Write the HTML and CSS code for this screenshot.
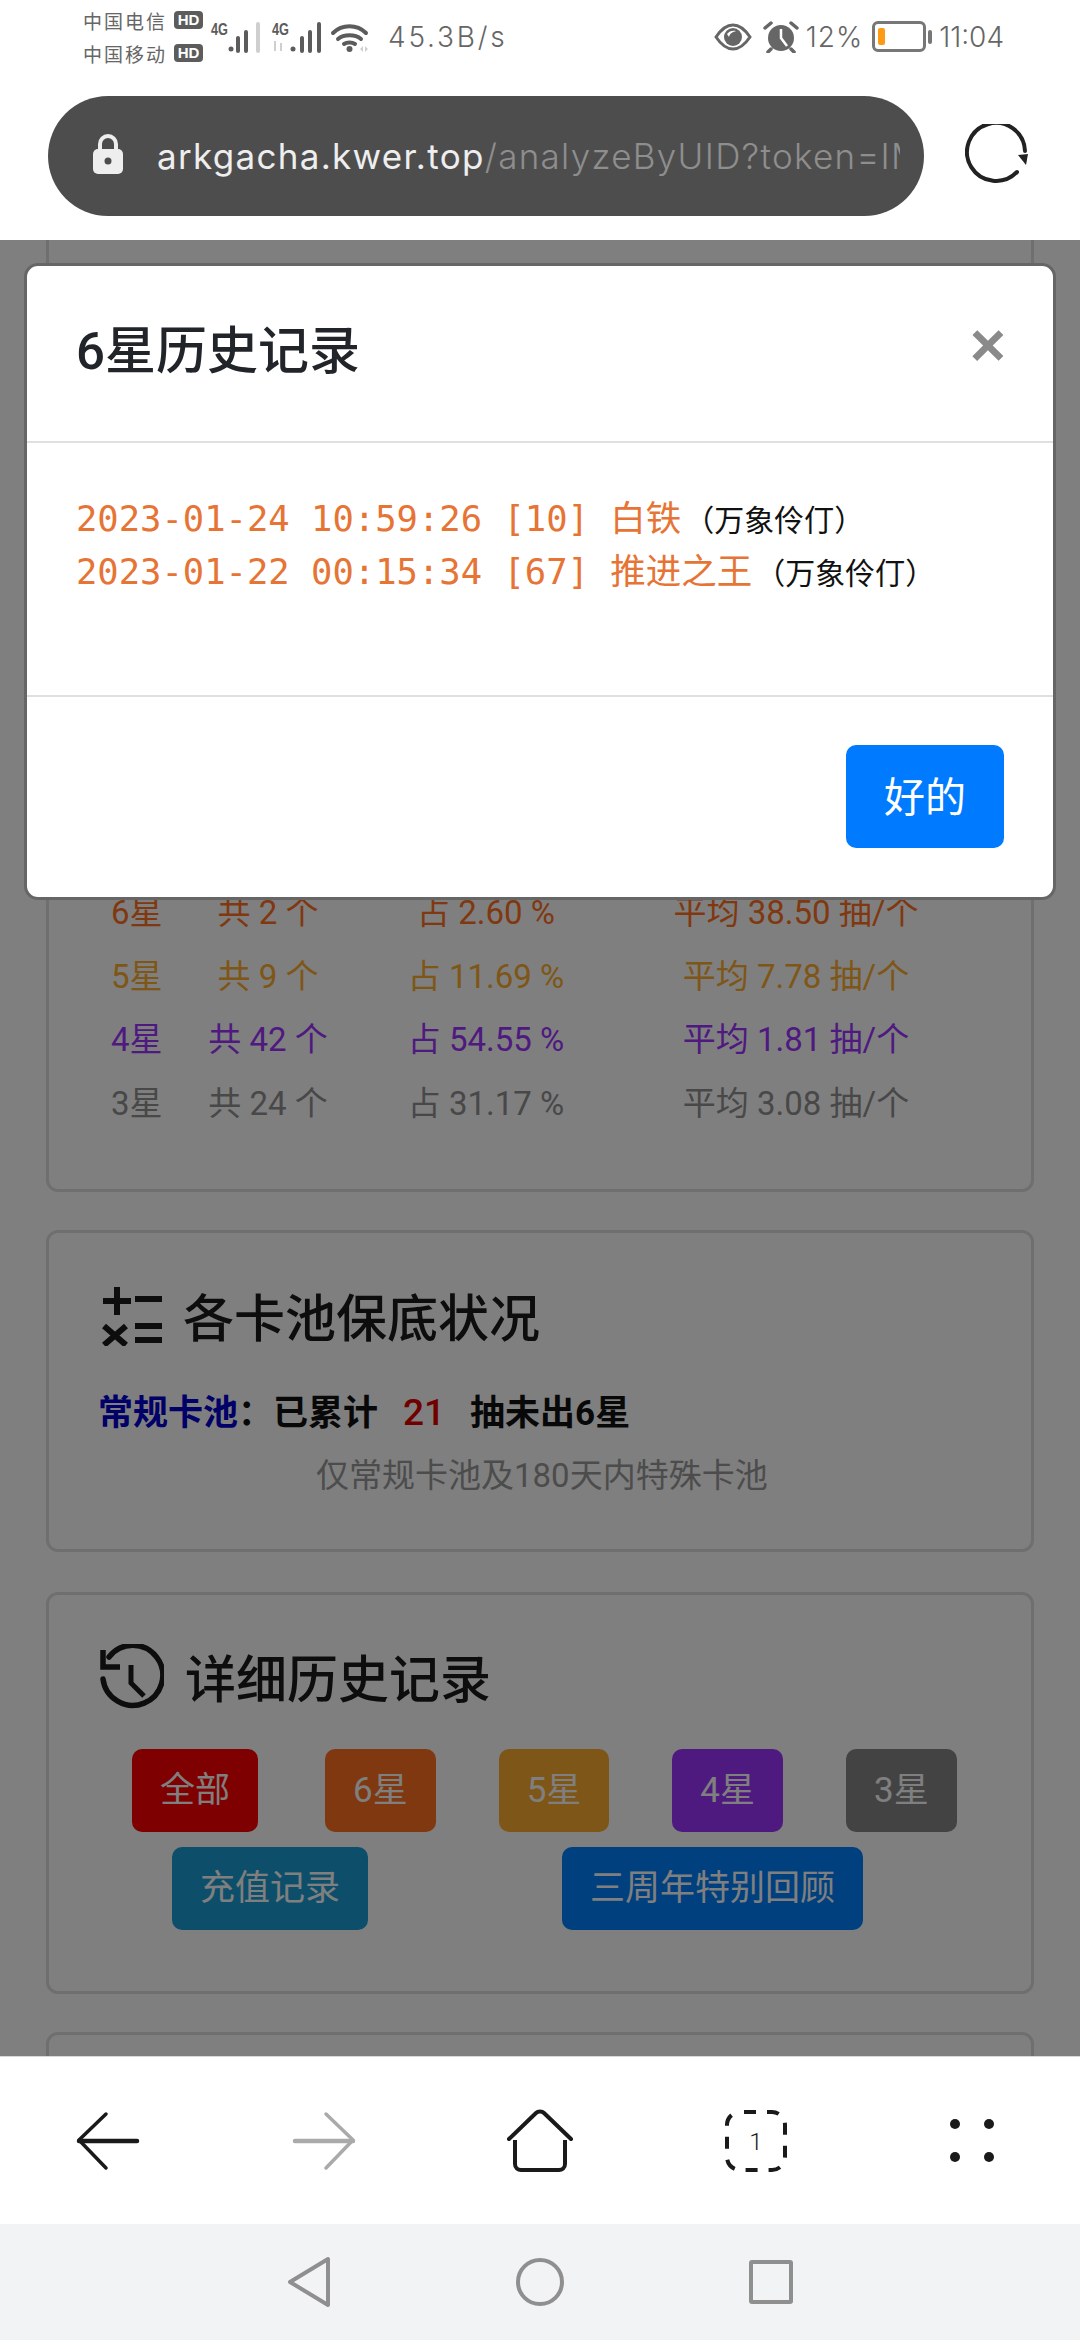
FILE: index.html
```html
<!DOCTYPE html>
<html lang="zh-CN">
<head>
    <meta charset="UTF-8">
    <meta name="viewport" content="width=device-width, initial-scale=1.0">
    <title>ArkGacha</title>
    <link rel="stylesheet" href="styles.css">
</head>
<body>
    <div class="phone">
        <header class="top">
            <div class="status">
                <div class="carriers">
                    <div class="carrier"><span>中国电信</span><b>HD</b></div>
                    <div class="carrier"><span>中国移动</span><b>HD</b></div>
                </div>
                <svg class="signals" width="160" height="36" viewBox="210 18 160 36">
                    <text x="211" y="34" class="net" textLength="17" lengthAdjust="spacingAndGlyphs">4G</text>
                    <circle cx="231" cy="48" r="2.5" fill="#5c5c5c"/>
                    <path d="M238 37v13M246 31v19" stroke="#5c5c5c" stroke-width="4" stroke-linecap="round"/>
                    <path d="M258 23v27" stroke="#cfcfcf" stroke-width="4" stroke-linecap="round"/>
                    <text x="272" y="34" class="net" textLength="17" lengthAdjust="spacingAndGlyphs">4G</text>
                    <path d="M275 40v10M281 42v8" stroke="#cfcfcf" stroke-width="2"/>
                    <circle cx="293" cy="48" r="2.5" fill="#5c5c5c"/>
                    <path d="M302 37v13M310 31v19M319 23v27" stroke="#5c5c5c" stroke-width="4" stroke-linecap="round"/>
                    <path d="M333 32c9-9 24-9 33 0M338 38c6-5 17-5 23 0M344 43c3-2 8-2 11 0" fill="none" stroke="#5c5c5c" stroke-width="4" stroke-linecap="round"/>
                    <circle cx="349.500" cy="48" r="3" fill="#5c5c5c"/>
                    <path d="M360 48l3-3v6zM368 48l-3-3v6z" fill="#cfcfcf"/>
                </svg>
                <span class="speed">45.3B/s</span>
                <div class="status-right">
                    <svg width="38" height="28" viewBox="0 0 38 28">
                        <path d="M2 14C8 5 13 2 19 2s11 3 17 12c-6 9-11 12-17 12S8 23 2 14z" fill="none" stroke="#666" stroke-width="3"/>
                        <circle cx="19" cy="14" r="9" fill="#666"/>
                        <path d="M13 11c2-3 6-4 9-3-3 1-6 2-7 6z" fill="#fff"/>
                    </svg>
                    <svg class="alarm" width="36" height="32" viewBox="0 0 36 32">
                        <circle cx="18" cy="17" r="13" fill="#666"/>
                        <path d="M18 8v9l6 8" fill="none" stroke="#fff" stroke-width="2.500"/>
                        <path d="M2 7l6-5M34 7l-6-5M8 28l-3 3M28 28l3 3" stroke="#666" stroke-width="3.500" stroke-linecap="round"/>
                    </svg>
                    <span class="pct">12%</span>
                    <div class="battery"><i></i></div>
                    <span class="clock">11:04</span>
                </div>
            </div>
            <div class="address">
                <div class="pill">
                    <svg class="lock" width="30" height="40" viewBox="0 0 30 40">
                        <path d="M7 18V10a8 8 0 0 1 16 0v8" fill="none" stroke="#eee" stroke-width="4"/>
                        <rect x="0" y="15" width="30" height="25" rx="5" fill="#eee"/>
                        <circle cx="15" cy="27" r="3.500" fill="#4d4d4d"/>
                    </svg>
                    <div class="url"><span class="host">arkgacha.kwer.top</span>/analyzeByUID?token=IM</div>
                </div>
                <svg class="reload" width="64" height="64" viewBox="0 0 64 64">
                    <path d="M52 48A29 29 0 1 1 60 27" fill="none" stroke="#222" stroke-width="4" stroke-linecap="round"/>
                    <path d="M53 31l10-1-2 11z" fill="#222"/>
                </svg>
            </div>
        </header>

        <main class="content">
            <section class="card card-stats">
                <div class="stat-row star6"><span>6星</span><span>共 2 个</span><span>占 2.60 %</span><span>平均 38.50 抽/个</span></div>
                <div class="stat-row star5"><span>5星</span><span>共 9 个</span><span>占 11.69 %</span><span>平均 7.78 抽/个</span></div>
                <div class="stat-row star4"><span>4星</span><span>共 42 个</span><span>占 54.55 %</span><span>平均 1.81 抽/个</span></div>
                <div class="stat-row star3"><span>3星</span><span>共 24 个</span><span>占 31.17 %</span><span>平均 3.08 抽/个</span></div>
            </section>

            <section class="card card-pity">
                <h2 class="card-title">
                    <svg width="62" height="60" viewBox="0 0 62 60">
                        <path d="M3 15h28M17 1v28M35 13h27M4 40l22 19M26 40L4 59M35 40h27M35 54h27" fill="none" stroke="#1a1a1a" stroke-width="6"/>
                    </svg>
                    各卡池保底状况
                </h2>
                <p class="pity-line"><span class="pool">常规卡池</span>：已累计<span class="count">21</span>抽未出6星</p>
                <p class="note">仅常规卡池及180天内特殊卡池</p>
            </section>

            <section class="card card-history">
                <h2 class="card-title">
                    <svg width="64" height="66" viewBox="0 0 64 66">
                        <path d="M9 13A30 30 0 1 1 3 35" fill="none" stroke="#1a1a1a" stroke-width="5.500" stroke-linecap="round"/>
                        <path d="M3 6v17h17" fill="none" stroke="#1a1a1a" stroke-width="5.500"/>
                        <path d="M31 21v18l13 13" fill="none" stroke="#1a1a1a" stroke-width="5"/>
                    </svg>
                    详细历史记录
                </h2>
                <div class="btn-row row-stars">
                    <button class="btn btn-all">全部</button>
                    <button class="btn btn-6">6星</button>
                    <button class="btn btn-5">5星</button>
                    <button class="btn btn-4">4星</button>
                    <button class="btn btn-3">3星</button>
                </div>
                <div class="btn-row row-extra">
                    <button class="btn btn-pay">充值记录</button>
                    <button class="btn btn-review">三周年特别回顾</button>
                </div>
            </section>

            <section class="card card-next"></section>

            <div class="backdrop"></div>
            <div class="modal">
                <div class="modal-header">
                    <h3>6星历史记录</h3>
                    <span class="close">×</span>
                </div>
                <div class="modal-body">
                    <div class="record"><span class="stamp">2023-01-24 10:59:26 [10] </span><span class="name">白铁</span><span class="banner">（万象伶仃）</span></div>
                    <div class="record"><span class="stamp">2023-01-22 00:15:34 [67] </span><span class="name">推进之王</span><span class="banner">（万象伶仃）</span></div>
                </div>
                <div class="modal-footer">
                    <button class="ok">好的</button>
                </div>
            </div>
        </main>

        <nav class="toolbar">
            <div class="tool">
                <svg width="64" height="60" viewBox="0 0 64 60">
                    <path d="M30 3L3 29l27 28" fill="none" stroke="#1a1a1a" stroke-width="3.500" stroke-linecap="round" stroke-linejoin="round"/>
                    <path d="M3 30h58" stroke="#1a1a1a" stroke-width="4.500" stroke-linecap="round"/>
                </svg>
            </div>
            <div class="tool">
                <svg width="64" height="60" viewBox="0 0 64 60">
                    <path d="M34 3l27 26-27 28" fill="none" stroke="#aaa" stroke-width="3.500" stroke-linecap="round" stroke-linejoin="round"/>
                    <path d="M3 30h58" stroke="#aaa" stroke-width="4.500" stroke-linecap="round"/>
                </svg>
            </div>
            <div class="tool">
                <svg width="68" height="64" viewBox="0 0 68 64">
                    <path d="M3 30L30 4c2-2 6-2 8 0l27 26" fill="none" stroke="#1a1a1a" stroke-width="4" stroke-linecap="round"/>
                    <path d="M9 31v24c0 4 3 6 6 6h38c3 0 6-2 6-6V31" fill="none" stroke="#1a1a1a" stroke-width="4"/>
                </svg>
            </div>
            <div class="tool">
                <svg width="64" height="64" viewBox="0 0 64 64">
                    <rect x="3" y="3" width="58" height="58" rx="13" fill="none" stroke="#1a1a1a" stroke-width="4" stroke-dasharray="12 11" stroke-dashoffset="-4"/>
                    <text x="32" y="41" text-anchor="middle" class="tab-count">1</text>
                </svg>
            </div>
            <div class="tool">
                <div class="dots"><i></i><i></i><i></i><i></i></div>
            </div>
        </nav>

        <nav class="sysnav">
            <div class="sys">
                <svg width="44" height="52" viewBox="0 0 44 52">
                    <path d="M41 3v46L3 26z" fill="none" stroke="#8f8f8f" stroke-width="4" stroke-linejoin="round"/>
                </svg>
            </div>
            <div class="sys"><div class="sys-circle"></div></div>
            <div class="sys"><div class="sys-square"></div></div>
        </nav>
    </div>
</body>
</html>
```

FILE: styles.css
```css
* {
    box-sizing: border-box;
}

html,
body {
    margin: 0;
    padding: 0;
    width: 1080px;
    height: 2340px;
    overflow: hidden;
}

body {
    font-family: Roboto, "Noto Sans CJK SC", sans-serif;
    background-color: #ffffff;
    color: #212529;
}

.phone {
    display: flex;
    flex-direction: column;
    height: 2340px;
}

/* top bars */
.top {
    height: 240px;
    background-color: #ffffff;
    flex: none;
}

.status {
    height: 73px;
    display: flex;
    align-items: center;
    padding: 0 76px 0 83px;
    color: #666666;
}

.carriers {
    width: 127px;
    flex: none;
}

.carrier {
    height: 33px;
    display: flex;
    align-items: center;
    gap: 7px;
    font-family: "Noto Sans CJK SC", sans-serif;
    font-size: 19px;
    letter-spacing: 2px;
    line-height: 1;
    white-space: nowrap;
}

.carrier b {
    width: 29px;
    height: 18px;
    border-radius: 4px;
    background-color: #5c5c5c;
    color: #ffffff;
    font-family: "Liberation Sans", sans-serif;
    font-size: 15px;
    letter-spacing: 0;
    line-height: 18px;
    text-align: center;
}

.signals {
    flex: none;
}

.net {
    font-family: "Liberation Sans", sans-serif;
    font-size: 17px;
    font-weight: 700;
    fill: #5c5c5c;
}

.speed {
    margin-left: 18px;
    font-family: Inter, sans-serif;
    font-size: 28px;
    font-weight: 300;
    letter-spacing: 2.8px;
    white-space: nowrap;
}

.status-right {
    margin-left: auto;
    display: flex;
    align-items: center;
    font-family: Inter, sans-serif;
    font-size: 28px;
    font-weight: 300;
    white-space: nowrap;
}

.alarm {
    margin-left: 11px;
}

.pct {
    margin-left: 7px;
    letter-spacing: 1px;
}

.battery {
    position: relative;
    width: 54px;
    height: 31px;
    margin-left: 9px;
    border: 3px solid #777777;
    border-radius: 6px;
    padding: 4px 3px;
}

.battery i {
    display: block;
    width: 7px;
    height: 100%;
    border-radius: 2px;
    background-color: #ff9a17;
}

/* battery tip */
.battery::after {
    content: "";
    position: absolute;
    right: -9px;
    top: 6px;
    width: 4px;
    height: 14px;
    border-radius: 2px;
    background-color: #777777;
}

.clock {
    margin-left: 13px;
}

.address {
    display: flex;
    align-items: center;
    margin-top: 23px;
    padding-left: 48px;
}

.pill {
    width: 876px;
    height: 120px;
    display: flex;
    align-items: center;
    padding: 0 24px 0 45px;
    border-radius: 60px;
    background-color: #4d4d4d;
}

.lock {
    flex: none;
    margin-top: -4px;
}

.url {
    margin-left: 34px;
    overflow: hidden;
    white-space: nowrap;
    font-family: Inter, sans-serif;
    font-size: 35px;
    font-weight: 300;
    letter-spacing: 1.3px;
    color: #8e8e8e;
}

.host {
    color: #eeeeee;
    font-weight: 400;
}

.reload {
    margin-left: 41px;
    flex: none;
}

/* page under the dialog */
.content {
    position: relative;
    flex: 1;
    min-height: 0;
    overflow: hidden;
    padding: 0 46px;
    background-color: #ffffff;
}

.card {
    width: 988px;
    margin-bottom: 38px;
    border: 3px solid #dedede;
    border-radius: 12px;
}

.card-stats {
    display: flex;
    flex-direction: column;
    justify-content: flex-end;
    height: 972px;
    margin-top: -20px;
    padding: 0 0 54px 62px;
}

.stat-row {
    display: grid;
    grid-template-columns: 49px 216px 220px 400px;
    height: 63.5px;
    line-height: 63.5px;
    font-size: 33px;
    text-align: center;
    white-space: nowrap;
}

.star6 {
    color: #ff701e;
}

.star5 {
    color: #fdac2e;
}

.star4 {
    color: #9e34ff;
}

.star3 {
    color: #909090;
}

.card-pity {
    height: 322px;
    padding: 53px 0 0 51px;
}

.card-history {
    height: 402px;
    margin-top: 40px;
    padding: 49px 0 0 51px;
}

.card-next {
    height: 200px;
}

.card-title {
    display: flex;
    align-items: center;
    gap: 21px;
    margin: 0;
    font-size: 51px;
    font-weight: 500;
    line-height: 60px;
    color: #1a1a1a;
}

/* the icons sit a little above the text */
.card-title svg {
    flex: none;
    margin-bottom: 8px;
}

.pity-line {
    margin: 34px 0 0 -2px;
    font-size: 35px;
    font-weight: 700;
    line-height: 50px;
    color: #111111;
}

.pool {
    color: #0000d0;
}

.count {
    margin: 0 25px;
    font-size: 37px;
    font-weight: 500;
    color: #e00000;
}

.note {
    margin: 12px 0 0 0;
    padding-left: 216px;
    font-size: 33px;
    line-height: 50px;
    color: #999999;
}

.btn-row {
    display: flex;
    padding-left: 32px;
}

.row-stars {
    gap: 63px;
    margin-top: 31px;
}

.row-extra {
    gap: 194px;
    margin-top: 15px;
    padding-left: 72px;
}

.btn {
    height: 83px;
    padding: 0 28px;
    border: none;
    border-radius: 10px;
    font-family: inherit;
    font-size: 35px;
    line-height: 83px;
    color: #ffffff;
    white-space: nowrap;
}

.btn-all {
    margin-right: 4px;
    background-color: #ff0000;
}

.btn-6 {
    background-color: #ff701e;
}

.btn-5 {
    background-color: #fdac2e;
}

.btn-4 {
    background-color: #9e34ff;
}

.btn-3 {
    background-color: #868686;
}

.btn-pay {
    background-color: #1a9ed6;
}

.btn-review {
    background-color: #0080ff;
}

/* dialog */
.backdrop {
    position: absolute;
    top: 0;
    right: 0;
    bottom: 0;
    left: 0;
    background-color: rgba(0, 0, 0, 0.5);
}

.modal {
    position: absolute;
    top: 23px;
    left: 24px;
    width: 1032px;
    height: 637px;
    border: 3px solid #666666;
    border-radius: 14px;
    background-color: #ffffff;
}

.modal-header {
    display: flex;
    justify-content: space-between;
    height: 177px;
    padding: 48px 47px 0 49px;
    border-bottom: 2px solid #e0e0e0;
}

.modal-header h3 {
    margin: 0;
    font-size: 51px;
    font-weight: 500;
    line-height: 76px;
    color: #212529;
}

.close {
    font-family: "Liberation Sans", sans-serif;
    font-size: 62px;
    font-weight: 700;
    line-height: 62px;
    color: #8a8a8a;
}

.modal-body {
    height: 254px;
    padding: 49px 0 0 49px;
    border-bottom: 2px solid #e0e0e0;
}

.record {
    height: 53px;
    line-height: 53px;
    white-space: pre;
}

.stamp {
    font-family: "DejaVu Sans Mono", monospace;
    font-size: 35.500px;
    color: #e67435;
}

.name {
    font-size: 35.500px;
    color: #e67435;
}

.banner {
    margin-left: 3px;
    font-size: 30px;
    color: #111111;
}

.modal-footer {
    display: flex;
    justify-content: flex-end;
    padding: 48px 49px 0 0;
}

.ok {
    width: 158px;
    height: 103px;
    padding: 0 0 6px;
    border: none;
    border-radius: 10px;
    background-color: #007bff;
    font-family: inherit;
    font-size: 41px;
    color: #ffffff;
}

/* bottom bars */
.toolbar {
    flex: none;
    display: flex;
    height: 168px;
    border-top: 1px solid #d8d8d8;
    background-color: #ffffff;
}

.tool {
    flex: 1;
    display: flex;
    align-items: center;
    justify-content: center;
}

.tab-count {
    font-family: Roboto, sans-serif;
    font-size: 24px;
    font-weight: 300;
    fill: #1a1a1a;
}

.dots {
    display: grid;
    grid-template-columns: 10px 10px;
    gap: 23px 24px;
}

.dots i {
    width: 10px;
    height: 10px;
    border-radius: 50%;
    background-color: #1a1a1a;
}

.sysnav {
    flex: none;
    display: flex;
    justify-content: center;
    height: 116px;
    background-color: #f1f3f5;
}

.sys {
    width: 231px;
    display: flex;
    align-items: center;
    justify-content: center;
}

.sys-circle {
    width: 48px;
    height: 48px;
    border: 4px solid #8f8f8f;
    border-radius: 50%;
}

.sys-square {
    width: 44px;
    height: 44px;
    border: 4px solid #8f8f8f;
    border-radius: 3px;
}
```
